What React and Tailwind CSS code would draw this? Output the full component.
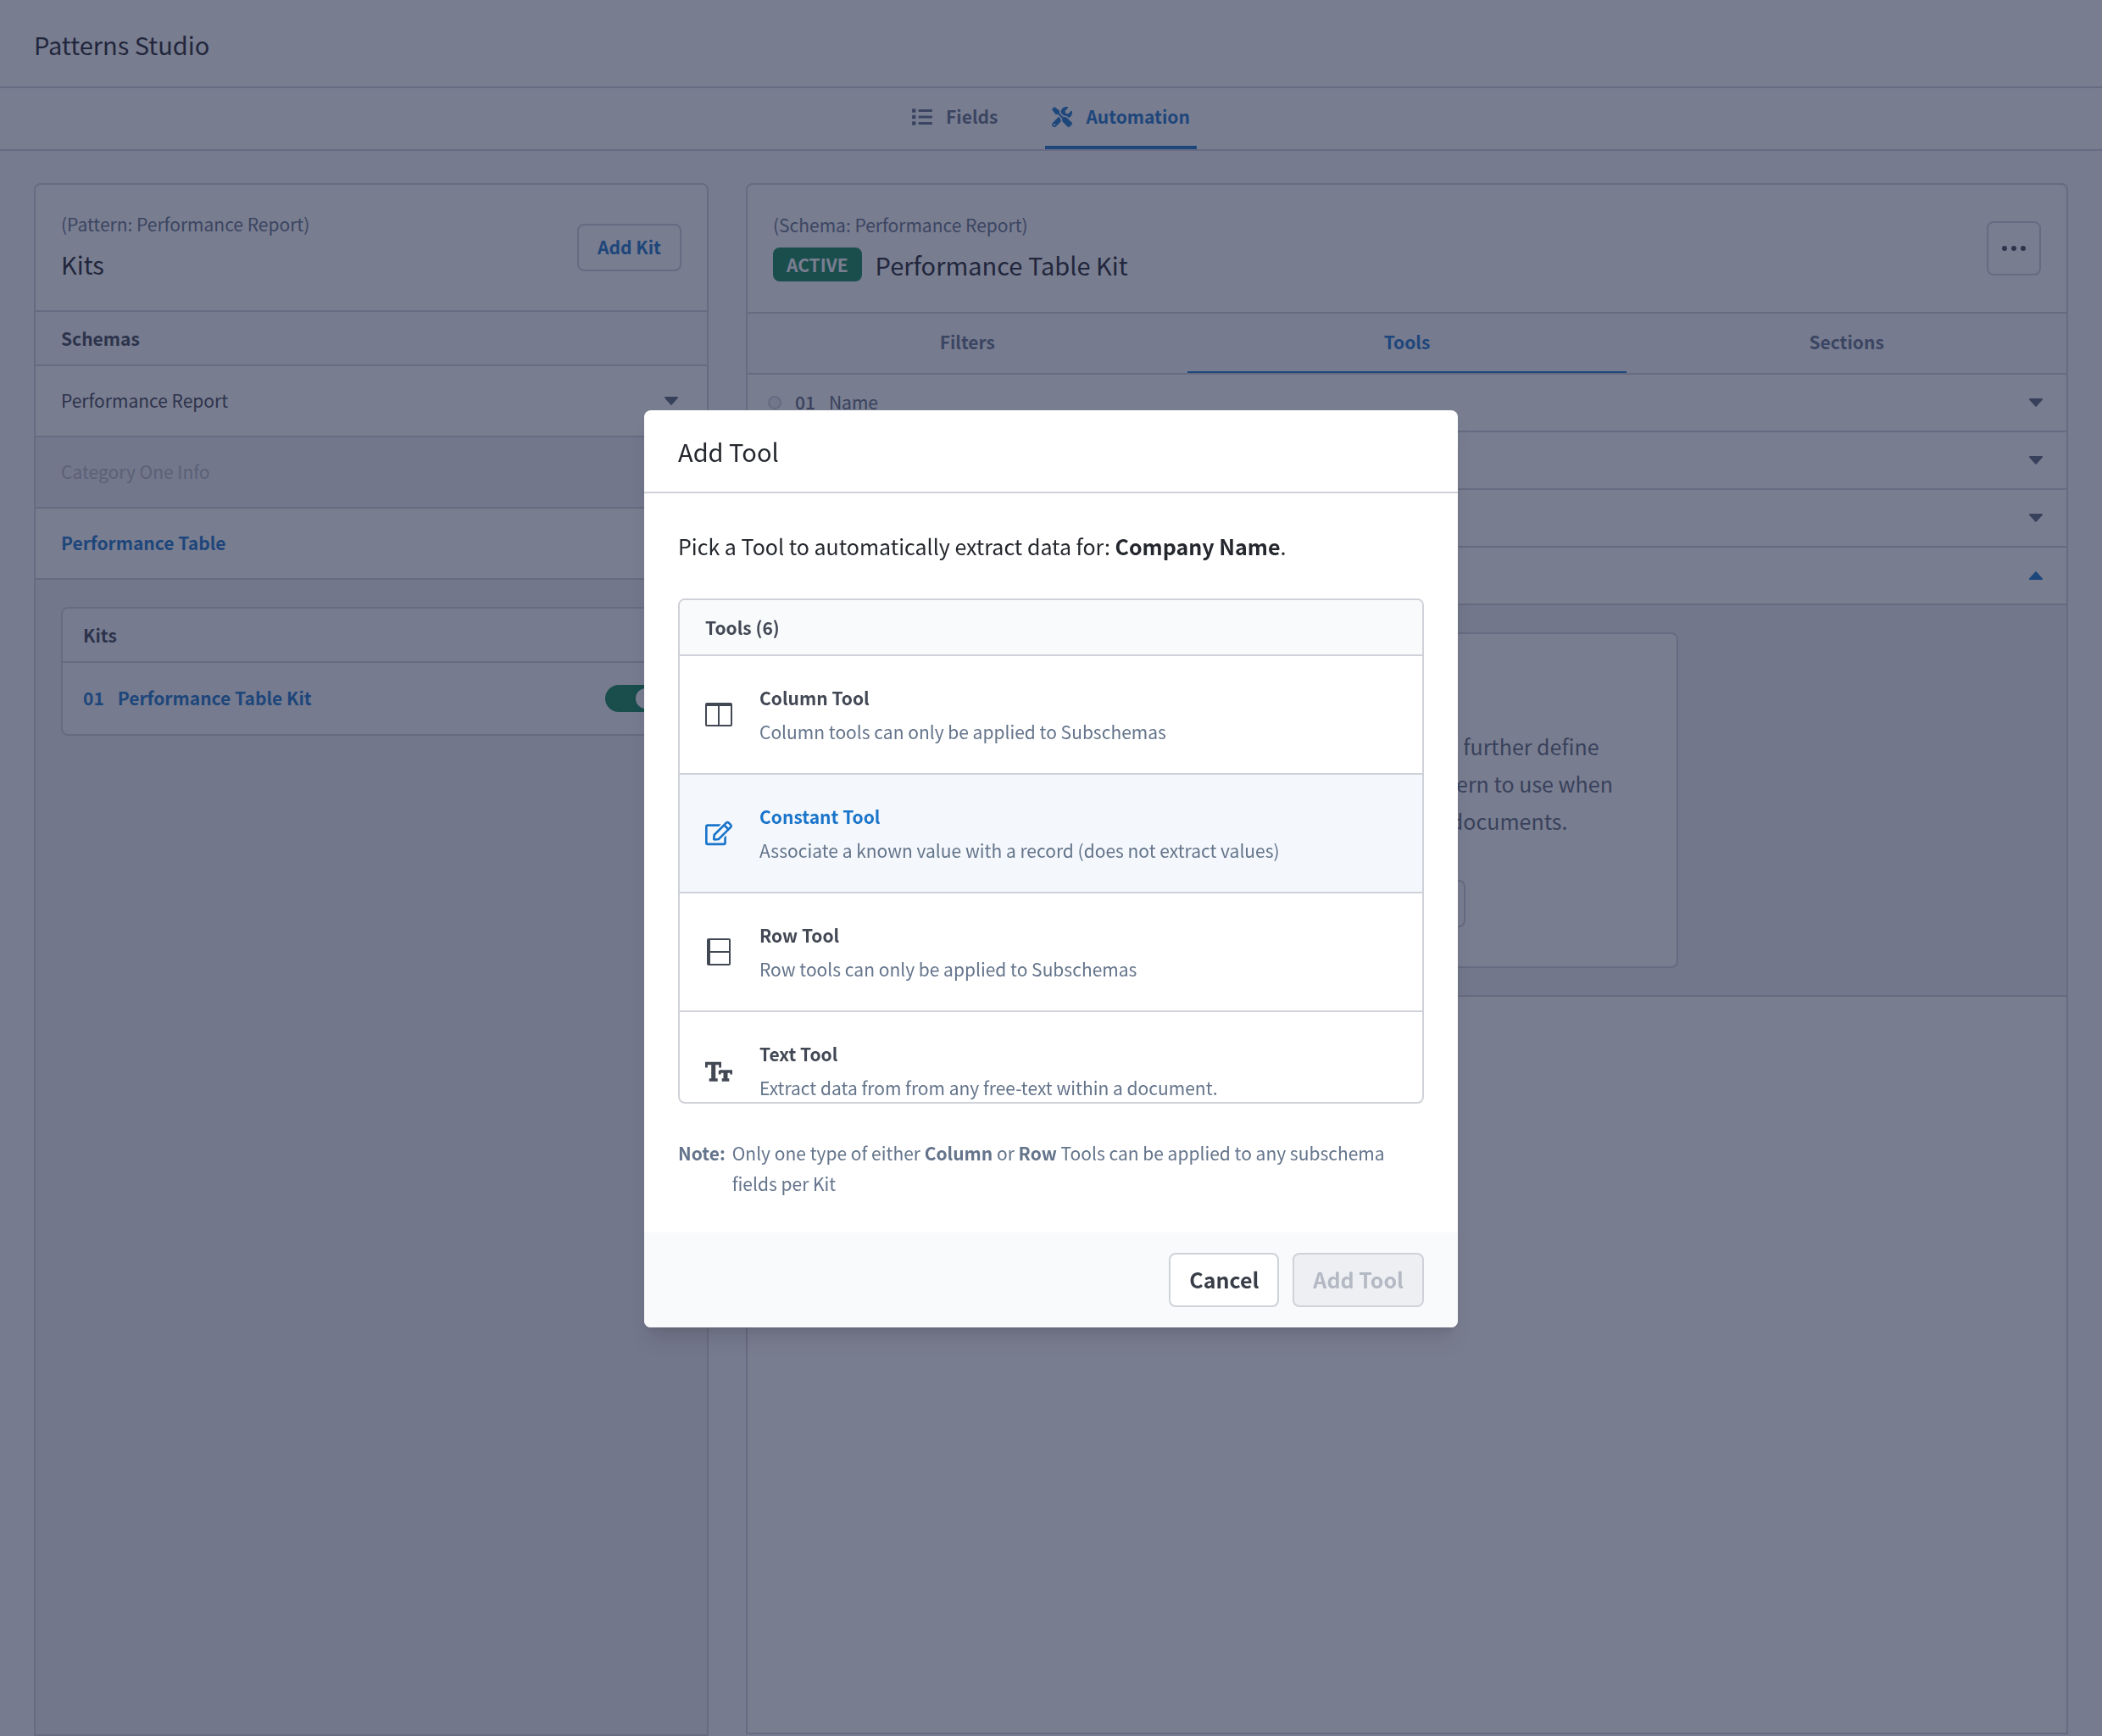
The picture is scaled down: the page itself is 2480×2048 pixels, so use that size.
import React from 'react';
import { FaList, FaRegEdit, FaTools } from 'react-icons/fa';

const ColumnIcon = () => (
  <svg viewBox="0 0 32 32" className="size-8 shrink-0" fill="currentColor" fillRule="evenodd" aria-hidden="true">
    <path d="M2 2h28a2 2 0 0 1 2 2v24a2 2 0 0 1-2 2H2a2 2 0 0 1-2-2V4a2 2 0 0 1 2-2zM2 6v22h13V6zM17 6v22h13V6z" />
  </svg>
);

const RowIcon = () => (
  <svg viewBox="0 0 32 32" className="size-8 shrink-0" fill="currentColor" fillRule="evenodd" aria-hidden="true">
    <path d="M4 0h24a2 2 0 0 1 2 2v28a2 2 0 0 1-2 2H4a2 2 0 0 1-2-2V2a2 2 0 0 1 2-2zM6 2v13h22V2zM6 17v13h22V17z" />
  </svg>
);

const EditIcon = () => <FaRegEdit className="size-8 shrink-0" aria-hidden="true" />;

const TextIcon = () => (
  <svg viewBox="0 0 32 32" className="size-8 shrink-0" fill="none" stroke="currentColor" aria-hidden="true">
    <path d="M0 7.500h19M4.700 27h10M17 17h15M19.700 27h8.600" strokeWidth="3.400" />
    <path d="M1.400 6v6.500M17.600 6v6.500M17.200 16v4.500M30.800 16v4.500" strokeWidth="2.800" />
    <path d="M9.700 7v20M24 16v11" strokeWidth="5" />
  </svg>
);

const Caret = ({ up }) => (
  <svg viewBox="0 0 16 10" className={up ? 'w-4 h-2.5 rotate-180 text-[#1a75ca]' : 'w-4 h-2.5 text-[#5c6a7c]'} fill="currentColor" aria-hidden="true">
    <path d="M1 0h14a1 1 0 0 1 .7 1.700l-7 7.800a1 1 0 0 1-1.400 0l-7-7.800A1 1 0 0 1 1 0z" />
  </svg>
);

const tools = [
  { name: 'Column Tool', description: 'Column tools can only be applied to Subschemas', icon: ColumnIcon },
  { name: 'Constant Tool', description: 'Associate a known value with a record (does not extract values)', icon: EditIcon, active: true },
  { name: 'Row Tool', description: 'Row tools can only be applied to Subschemas', icon: RowIcon },
  { name: 'Text Tool', description: 'Extract data from from any free-text within a document.', icon: TextIcon },
];

const fields = [
  { number: '01', name: 'Name' },
  { number: '02', name: 'Category' },
  { number: '03', name: 'Date' },
  { number: '04', name: 'Company Name', open: true },
];

const KitsPanel = () => (
  <section className="flex flex-col rounded-t-lg border-2 border-[#d0d2d9] bg-[#eff0f3] overflow-hidden">
    <div className="flex items-center justify-between h-[150px] px-[30px] bg-white border-b-2 border-[#d0d2d9]">
      <div>
        <p className="leading-[38px] text-[#64748b]">(Pattern: Performance Report)</p>
        <h2 className="text-[29px] leading-[56px] text-[#24272d]">Kits</h2>
      </div>
      <button className="h-14 px-[22px] rounded-lg border-2 border-[#d0d2d9] font-bold text-[#1a75ca]">Add Kit</button>
    </div>
    <h3 className="h-16 px-[30px] leading-[62px] bg-[#f8fafc] border-b-2 border-[#d0d2d9] font-bold text-[#424854]">Schemas</h3>
    <button className="flex items-center justify-between h-[84px] pl-[30px] pr-[34px] bg-white border-b-2 border-[#d0d2d9] text-[#424854]">
      Performance Report
      <Caret />
    </button>
    <button disabled className="h-[84px] px-[30px] border-b-2 border-[#d0d2d9] text-left text-[#b4b9c4]">Category One Info</button>
    <button className="h-[84px] px-[30px] bg-white border-b-2 border-[#d0d2d9] text-left font-bold text-[#1a75ca]">Performance Table</button>
    <div className="p-[30px] pt-8">
      <div className="rounded-lg border-2 border-[#d0d2d9] bg-[#f8fafc]">
        <h3 className="h-16 px-6 leading-[62px] border-b-2 border-[#d0d2d9] font-bold text-[#424854]">Kits</h3>
        <div className="flex items-center h-[84px] px-6 font-bold text-[#1a75ca]">
          <span>01</span>
          <a href="#kit" className="ml-4">Performance Table Kit</a>
          <label className="relative ml-auto w-16 h-8 rounded-full bg-[#108a58]">
            <input type="checkbox" defaultChecked aria-label="Kit enabled" className="absolute inset-0 opacity-0" />
            <span className="absolute right-1 top-1 size-6 rounded-full bg-white" />
          </label>
        </div>
      </div>
    </div>
  </section>
);

const SchemaPanel = () => (
  <section className="flex flex-col mb-0.5 rounded-t-lg border-2 border-[#d0d2d9] bg-white overflow-hidden">
    <div className="flex items-center justify-between h-[152px] px-[30px] border-b-2 border-[#d0d2d9]">
      <div>
        <p className="leading-[38px] text-[#64748b]">(Schema: Performance Report)</p>
        <div className="flex items-center gap-4 h-14">
          <span className="h-10 px-4 leading-10 rounded-lg bg-[#108a58] font-bold text-white">ACTIVE</span>
          <h2 className="text-[29px] leading-[56px] text-[#24272d]">Performance Table Kit</h2>
        </div>
      </div>
      <button aria-label="More actions" className="flex items-center justify-center size-16 rounded-lg border-2 border-[#d0d2d9] text-[#424854]">
        <svg viewBox="0 0 28 6" className="w-7 h-1.5" fill="currentColor">
          <circle cx="3" cy="3" r="3" />
          <circle cx="14" cy="3" r="3" />
          <circle cx="25" cy="3" r="3" />
        </svg>
      </button>
    </div>
    <nav className="grid grid-cols-3 h-[72px] bg-[#f8fafc] border-b-2 border-[#d0d2d9] font-bold text-[#64748b]">
      <button className="border-b-2 border-transparent">Filters</button>
      <button className="border-b-2 border-[#1a75ca] text-[#1a75ca]">Tools</button>
      <button className="border-b-2 border-transparent">Sections</button>
    </nav>
    {fields.map((field) => (
      <button key={field.number} className="flex items-center h-[68px] pl-6 pr-7 border-b-2 border-[#d0d2d9] text-[#5c6a7c]">
        <span className="size-4 rounded-full border-2 border-[#d0d2d9] bg-[#eff0f3]" />
        <span className="ml-4 font-medium">{field.number}</span>
        <span className="ml-4 mr-auto">{field.name}</span>
        <Caret up={field.open} />
      </button>
    ))}
    <div className="py-8 bg-[#eff0f3] border-b-2 border-[#d0d2d9]">
      <div className="w-[640px] h-[396px] mx-auto pt-[110px] rounded-lg border-2 border-[#d0d2d9] bg-white text-center">
        <p className="text-[25px] leading-[44px] text-[#5c6a7c]">
          Add a Tool to this field to further define
          <br />
          what data you want a pattern to use when
          <br />
          extracting its data in documents.
        </p>
        <button className="h-14 mt-12 px-[22px] rounded-lg border-2 border-[#d0d2d9] font-bold text-[#1a75ca]">Add Tool</button>
      </div>
    </div>
  </section>
);

const AddToolDialog = () => (
  <div className="fixed inset-0 flex items-center justify-center pt-0.5 bg-[#202646]/60">
    <div role="dialog" aria-modal="true" aria-labelledby="dialog-title" className="w-[960px] rounded-lg bg-white shadow-xl overflow-hidden">
      <h2 id="dialog-title" className="h-[98px] px-10 leading-[96px] border-b-2 border-[#d0d2d9] text-[29px] text-[#24272d]">Add Tool</h2>
      <div className="p-10">
        <p className="leading-[44px] text-[25px] text-[#24272d]">
          Pick a Tool to automatically extract data for: <strong className="font-bold">Company Name</strong>.
        </p>
        <div className="h-[596px] mt-10 rounded-lg border-2 border-[#d0d2d9] overflow-hidden">
          <h3 className="h-[66px] px-[30px] leading-[64px] bg-[#f8fafc] border-b-2 border-[#d0d2d9] font-bold text-[#424854]">Tools (6)</h3>
          {tools.map(({ name, description, icon: Icon, active }) => (
            <button
              key={name}
              className={`flex items-center gap-8 w-full h-[140px] px-[30px] border-b-2 border-[#d0d2d9] text-left ${active ? 'bg-[#f4f8fc] text-[#1a75ca]' : 'text-[#424854]'}`}
            >
              <Icon />
              <span>
                <span className="block leading-10 font-bold">{name}</span>
                <span className="block leading-10 text-[#64748b]">{description}</span>
              </span>
            </button>
          ))}
        </div>
        <div className="flex gap-2 mt-10 leading-9 text-[#64748b]">
          <strong className="font-bold">Note:</strong>
          <p>
            Only one type of either <strong className="font-bold">Column</strong> or <strong className="font-bold">Row</strong> Tools can be applied to any subschema fields per Kit
          </p>
        </div>
      </div>
      <div className="flex items-center justify-end gap-4 h-28 px-10 bg-[#f8fafc] text-[25px] font-bold">
        <button className="h-16 px-[22px] rounded-lg border-2 border-[#d0d2d9] bg-white text-[#383d47]">Cancel</button>
        <button disabled className="h-16 px-[22px] rounded-lg border-2 border-[#d0d2d9] bg-[#edeff3] text-[#b4b9c4]">Add Tool</button>
      </div>
    </div>
  </div>
);

export default function App() {
  return (
    <div className="flex flex-col min-h-screen bg-[#f8fafc] font-['Noto_Sans_CJK_SC',sans-serif] text-[21px]">
      <header className="h-[104px] px-10 bg-white border-b-2 border-[#d0d2d9]">
        <h1 className="text-[29px] leading-[104px] text-[#24272d]">Patterns Studio</h1>
      </header>
      <nav className="flex justify-center gap-12 h-[74px] bg-white border-b-2 border-[#d0d2d9] font-bold text-[#64748b]">
        <a href="#fields" className="flex items-center gap-4 px-2 border-b-4 border-transparent">
          <FaList className="size-6" />
          Fields
        </a>
        <a href="#automation" className="flex items-center gap-4 px-2 border-b-4 border-[#1a75ca] text-[#1a75ca]">
          <FaTools className="size-6" />
          Automation
        </a>
      </nav>
      <main className="grid grow grid-cols-[1fr_1.96fr] gap-11 px-10 pt-[38px]">
        <KitsPanel />
        <SchemaPanel />
      </main>
      <AddToolDialog />
    </div>
  );
}
